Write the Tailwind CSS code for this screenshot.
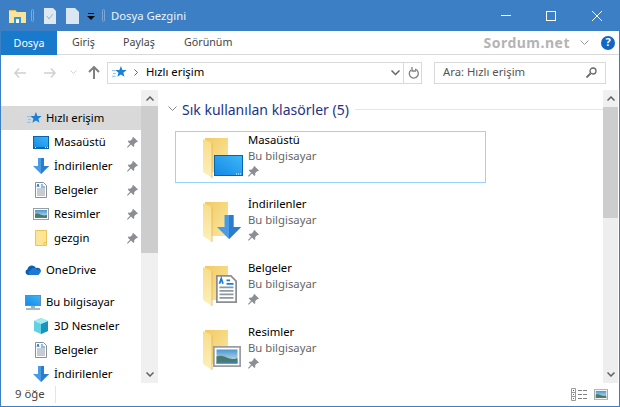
<!DOCTYPE html>
<html lang="tr">
<head>
  <meta charset="UTF-8" />
  <title>Dosya Gezgini</title>
  <script src="https://cdn.jsdelivr.net/npm/@tailwindcss/browser@4"></script>
</head>
<body class="bg-white">

<!-- icons -->
<svg class="fixed w-0 h-0" width="0" height="0">
  <defs>
    <linearGradient id="screen" x1="0" y1="1" x2="1" y2="0"><stop offset="0" stop-color="#1488e4"/><stop offset="1" stop-color="#3db8f8"/></linearGradient>
    <linearGradient id="sky" x1="0" y1="0" x2="0" y2="1"><stop offset="0" stop-color="#4a97cf"/><stop offset="1" stop-color="#d8eaf3"/></linearGradient>
    <linearGradient id="fold" x1="0" y1="0" x2="1" y2="1"><stop offset="0" stop-color="#f2c962"/><stop offset="1" stop-color="#fbe8a2"/></linearGradient>
    <linearGradient id="flap" x1="0" y1="0" x2="0" y2="1"><stop offset="0" stop-color="#f8dc88"/><stop offset="1" stop-color="#fdf0bc"/></linearGradient>
    <symbol id="pin" viewBox="0 0 12 12">
      <path d="M7 0l5 5-1 .8-.8-.3-2.400 2.400.2 1.900-1 1-2.600-2.600L.8 11.600 0 11l3.300-3.700L.8 4.800l1-1 1.900.2 2.400-2.400-.3-.8z" fill="#8b8f93"/>
    </symbol>
    <symbol id="star" viewBox="0 0 16 16">
      <path d="M9.500 1l1.600 4.200 4.500.2-3.500 2.800 1.200 4.400L9.500 10.100 5.700 12.600l1.200-4.400-3.400-2.800 4.400-.2z" fill="#1a7fd6"/>
      <path d="M0 6h4M1 9h3M0 12h4" stroke="#7cc0ef" stroke-width="1"/>
    </symbol>
    <symbol id="desk" viewBox="0 0 16 13">
      <rect x=".5" y=".5" width="15" height="12" fill="url(#screen)" stroke="#0a64ad"/>
      <path d="M1 11.500h14" stroke="#0a64ad"/><path d="M12 11.500h1M14 11.500h1M2 11.500h1" stroke="#ffffff"/>
    </symbol>
    <symbol id="down" viewBox="0 0 16 16">
      <path d="M5 0h6v8h5l-8 8-8-8h5z" fill="#4a9be6"/><path d="M8 0h3v8h5l-8 8z" fill="#2a7ccf"/>
    </symbol>
    <symbol id="doc" viewBox="0 0 12 16">
      <path d="M.5.500h8l3 3v12H.5z" fill="#fff" stroke="#8b8f93"/>
      <path d="M2 7h8M2 9h8M2 11h8M2 13h8" stroke="#8d98a2"/><path d="M2 5l1-3 1 3" fill="none" stroke="#1a7fd6"/><path d="M6 3h2M6 5h4" stroke="#1a7fd6"/>
    </symbol>
    <symbol id="pic" viewBox="0 0 16 12">
      <rect x=".5" y=".5" width="15" height="11" fill="#fff" stroke="#9a9ea2"/>
      <rect x="2" y="2" width="12" height="8" fill="url(#sky)"/>
      <path d="M2 6c3-1 4 0 7 1s4 0 5 0v3H2z" fill="#4a7a6a"/>
      <path d="M2 9h12v1H2z" fill="#3f7fb4"/>
    </symbol>
    <symbol id="plain" viewBox="0 0 12 16">
      <path d="M.5.500h11v15H.5z" fill="#fde595" stroke="#e8c45a"/><path d="M9 15.500v-3h2.500" fill="none" stroke="#e8c45a"/>
    </symbol>
    <symbol id="bigfolder" viewBox="0 0 26 40">
      <path d="M2 0h23v34H2z" fill="url(#fold)"/>
      <path d="M0 1l9 4v35l-9-6z" fill="url(#flap)"/>
      <path d="M9 5v35" stroke="#e2b54e" stroke-width=".8"/>
    </symbol>
  </defs>
</svg>

<div class="w-[620px] h-[407px] border border-t-0 border-[#3c7fc4] flex flex-col overflow-hidden text-[11.300px] text-black" style="font-family:'Noto Sans','Open Sans',sans-serif">

  <!-- title bar -->
  <div class="h-[31px] shrink-0 -mx-px bg-[#3c7fc4] flex items-center text-[#eef4fa]">
    <svg class="ml-[9px] w-[17px] h-[15px]" viewBox="0 0 17 15"><path d="M0 2h6l2 2h9v11H0z" fill="#fbe39a"/><path d="M0 2h6l1 1H0z" fill="#e9bd51"/><path d="M5 9h7v6H5z" fill="#2b9be0"/><path d="M7 11h3v4H7z" fill="#fff"/></svg>
    <div class="ml-[5px] w-[3px] h-[13px] border border-[#7ea8d6] rounded-sm"></div>
    <svg class="ml-[10px] w-[12px] h-[16px]" viewBox="0 0 12 16"><path d="M0 0h9l3 3v13H0z" fill="#dfe8f3"/><path d="M3 8l2 3 4-5" fill="none" stroke="#9fb2c6"/></svg>
    <svg class="ml-[10px] w-[13px] h-[16px]" viewBox="0 0 13 16"><path d="M0 0h9l4 4v12H0z" fill="#dbe6f4"/></svg>
    <svg class="ml-[8px] w-[8px] h-[8px] mt-[3px]" viewBox="0 0 8 8"><path d="M1 0h6v1H1zM0 3h8L4 7z" fill="#0a0a0a"/></svg>
    <div class="ml-[7px] w-[3px] h-[13px] border border-[#7ea8d6] rounded-sm"></div>
    <div class="ml-[6px] leading-none">Dosya Gezgini</div>
    <div class="ml-auto flex items-center">
      <div class="w-[10px] h-px bg-white"></div>
      <div class="ml-[35px] w-[10px] h-[10px] border border-white"></div>
      <svg class="ml-[36px] mr-[18px] w-[10px] h-[10px]" viewBox="0 0 10 10"><path d="M0 0l10 10M10 0L0 10" stroke="#fff" stroke-width="1"/></svg>
    </div>
  </div>

  <!-- ribbon tabs -->
  <div class="h-[24px] shrink-0 border-b border-[#d9d9d9] flex items-stretch text-[#444] text-[10.700px]">
    <div class="w-[56px] -mb-px bg-[#1979ca] text-white flex items-center justify-center">Dosya</div>
    <div class="ml-[15px] w-[21px] flex items-center">Giriş</div>
    <div class="ml-[30px] w-[31px] flex items-center">Paylaş</div>
    <div class="ml-[30px] flex items-center">Görünüm</div>
    <div class="ml-auto flex items-center font-bold text-[#b4b4b4] text-[14px] tracking-[.5px] pr-[7px]">Sordum.net</div>
    <svg class="ml-[3px] self-center w-[9px] h-[6px]" viewBox="0 0 9 6"><path d="M.5.500L4.500 4.500 8.500.500" fill="none" stroke="#9a9a9a"/></svg>
    <div class="ml-[12px] mr-[4px] self-center w-[14px] h-[14px] rounded-full bg-[#1068c4] text-white font-bold text-[11px] flex items-center justify-center">?</div>
  </div>

  <!-- address row -->
  <div class="h-[35px] shrink-0 flex items-center">
    <svg class="ml-[13px] w-[12px] h-[10px]" viewBox="0 0 12 10"><path d="M5 .5L1 5l4 4.500M1 5h11" fill="none" stroke="#d0d0d0" stroke-width="1.500"/></svg>
    <svg class="ml-[18px] w-[12px] h-[10px]" viewBox="0 0 12 10"><path d="M7 .5L11 5 7 9.500M11 5H0" fill="none" stroke="#d0d0d0" stroke-width="1.500"/></svg>
    <svg class="ml-[14px] w-[7px] h-[5px]" viewBox="0 0 7 5"><path d="M.5.500l3 3 3-3" fill="none" stroke="#d0d0d0"/></svg>
    <svg class="ml-[11px] w-[12px] h-[13px]" viewBox="0 0 12 13"><path d="M1 6l5-5 5 5M6 1v12" fill="none" stroke="#808080" stroke-width="2"/></svg>
    <div class="ml-[7px] w-[315px] h-[22px] border border-[#d9d9d9] flex items-center">
      <svg class="ml-[4px] w-[15px] h-[15px]"><use href="#star"/></svg>
      <svg class="ml-[7px] w-[4px] h-[7px]" viewBox="0 0 4 7"><path d="M.5.500l3 3-3 3" fill="none" stroke="#666"/></svg>
      <div class="ml-[8px]">Hızlı erişim</div>
      <svg class="ml-auto w-[9px] h-[6px]" viewBox="0 0 9 6"><path d="M.5.500l4 4 4-4" fill="none" stroke="#666" stroke-width="1.500"/></svg>
      <div class="ml-[3px] w-px h-full bg-[#d9d9d9]"></div>
      <svg class="ml-[4px] mr-[2px] w-[11px] h-[12px]" viewBox="0 0 11 12"><path d="M3 3a4.500 4.500 0 1 0 4-.8" fill="none" stroke="#808080" stroke-width="1.300"/><path d="M4 0v4h4" fill="none" stroke="#808080" stroke-width="1.300"/></svg>
    </div>
    <div class="ml-[12px] w-[172px] h-[22px] border border-[#d9d9d9] flex items-center text-[#555]">
      <div class="ml-[8px]">Ara: Hızlı erişim</div>
      <svg class="ml-auto mr-[8px] w-[11px] h-[11px]" viewBox="0 0 11 11"><circle cx="7" cy="4" r="3" fill="none" stroke="#666" stroke-width="1.300"/><path d="M4.500 6.500L.5 10.500" stroke="#666" stroke-width="1.800"/></svg>
    </div>
  </div>

  <!-- body -->
  <div class="flex-1 min-h-0 flex">

    <!-- nav pane -->
    <div class="w-[140px] shrink-0 pt-[16px] overflow-hidden">
      <div class="h-[24px] bg-[#d9d9d9] flex items-center pl-[26px]"><svg class="w-[15px] h-[15px]"><use href="#star"/></svg><span class="ml-[4px]">Hızlı erişim</span></div>
      <div class="h-[24px] flex items-center pl-[32px]"><svg class="w-[16px] h-[13px]"><use href="#desk"/></svg><span class="ml-[5px]">Masaüstü</span><svg class="ml-auto mr-[3px] w-[11px] h-[11px]"><use href="#pin"/></svg></div>
      <div class="h-[24px] flex items-center pl-[32px]"><svg class="w-[16px] h-[16px]"><use href="#down"/></svg><span class="ml-[5px]">İndirilenler</span><svg class="ml-auto mr-[3px] w-[11px] h-[11px]"><use href="#pin"/></svg></div>
      <div class="h-[24px] flex items-center pl-[34px]"><svg class="w-[12px] h-[16px]"><use href="#doc"/></svg><span class="ml-[7px]">Belgeler</span><svg class="ml-auto mr-[3px] w-[11px] h-[11px]"><use href="#pin"/></svg></div>
      <div class="h-[24px] flex items-center pl-[32px]"><svg class="w-[16px] h-[12px]"><use href="#pic"/></svg><span class="ml-[5px]">Resimler</span><svg class="ml-auto mr-[3px] w-[11px] h-[11px]"><use href="#pin"/></svg></div>
      <div class="h-[24px] flex items-center pl-[34px]"><svg class="w-[12px] h-[16px]"><use href="#plain"/></svg><span class="ml-[7px]">gezgin</span><svg class="ml-auto mr-[3px] w-[11px] h-[11px]"><use href="#pin"/></svg></div>

      <div class="mt-[8px] h-[24px] flex items-center pl-[24px]">
        <svg class="w-[16px] h-[10px]" viewBox="0 0 16 10"><path d="M3 10a3 3 0 0 1-.5-5.800A4.500 4.500 0 0 1 11 3a3.400 3.400 0 0 1 4.800 3.600L6 10z" fill="#0f5fb0"/><path d="M5 10a2.200 2.200 0 0 1 .5-4.300 3.500 3.500 0 0 1 6.500-1A2.800 2.800 0 0 1 15.800 7L13.500 10z" fill="#1f78d1"/></svg>
        <span class="ml-[5px]">OneDrive</span>
      </div>
      <div class="mt-[8px] h-[24px] flex items-center pl-[24px]">
        <svg class="w-[16px] h-[15px]" viewBox="0 0 16 15"><rect x=".5" y=".5" width="15" height="10" fill="url(#screen)" stroke="#5f8db8"/><path d="M6 11h4v2H6z" fill="#9fb3c4"/><path d="M1 14h14" stroke="#8aa0b4" stroke-width="1.500"/></svg>
        <span class="ml-[5px]">Bu bilgisayar</span>
      </div>
      <div class="h-[24px] flex items-center pl-[32px]">
        <svg class="w-[16px] h-[16px]" viewBox="0 0 16 16"><path d="M8 0l7 3v10l-7 3-7-3V3z" fill="#5fd2e4"/><path d="M8 6l7-3v10l-7 3z" fill="#1b93bc"/><path d="M8 0l7 3-7 3-7-3z" fill="#a7eaf2"/></svg>
        <span class="ml-[5px]">3D Nesneler</span>
      </div>
      <div class="h-[24px] flex items-center pl-[34px]"><svg class="w-[12px] h-[16px]"><use href="#doc"/></svg><span class="ml-[7px]">Belgeler</span></div>
      <div class="h-[24px] flex items-center pl-[32px]"><svg class="w-[16px] h-[16px]"><use href="#down"/></svg><span class="ml-[5px]">İndirilenler</span></div>
    </div>

    <!-- nav scrollbar -->
    <div class="w-[17px] shrink-0 bg-[#f0f0f0] flex flex-col">
      <div class="h-[16px] flex items-center justify-center"><svg class="w-[8px] h-[5px]" viewBox="0 0 8 5"><path d="M.5 4.500L4 1l3.500 3.500" fill="none" stroke="#606060" stroke-width="1.500"/></svg></div>
      <div class="h-[147px] bg-[#cdcdcd]"></div>
      <div class="flex-1"></div>
      <div class="h-[18px] flex items-center justify-center"><svg class="w-[8px] h-[5px]" viewBox="0 0 8 5"><path d="M.5.500L4 4l3.500-3.500" fill="none" stroke="#606060" stroke-width="1.500"/></svg></div>
    </div>

    <!-- main pane -->
    <div class="flex-1 min-w-0 pl-[9px] pt-[9px]">
      <div class="h-[20px] flex items-center">
        <svg class="ml-[1px] w-[9px] h-[6px]" viewBox="0 0 9 6"><path d="M.5.500l4 4 4-4" fill="none" stroke="#8a8a8a"/></svg>
        <span class="ml-[5px] text-[14px] text-[#1e3287]">Sık kullanılan klasörler (5)</span>
        <div class="ml-[6px] flex-1 h-px bg-[#e5e5e5]"></div>
      </div>
      <div class="mt-[12px] ml-[8px] flex flex-col">

        <div class="w-[311px] h-[52px] border border-[#99d1ff] flex">
          <svg class="ml-[27px] mt-[6px] w-[42px] h-[42px]" viewBox="0 0 42 42"><use href="#bigfolder" width="26" height="40"/><rect x="11.500" y="17.500" width="28" height="20" fill="url(#screen)" stroke="#0a64ad"/><path d="M33 36h6" stroke="#fff" stroke-dasharray="1 1"/></svg>
          <div class="ml-[3px] leading-[16px]"><div>Masaüstü</div><div class="text-[#666]">Bu bilgisayar</div><svg class="w-[11px] h-[11px] mt-[2px]"><use href="#pin"/></svg></div>
        </div>
        <div class="mt-[12px] w-[311px] h-[52px] border border-transparent flex">
          <svg class="ml-[27px] mt-[6px] w-[42px] h-[42px]" viewBox="0 0 42 42"><use href="#bigfolder" width="26" height="40"/><use href="#down" x="14" y="13" width="24" height="24"/></svg>
          <div class="ml-[3px] leading-[16px]"><div>İndirilenler</div><div class="text-[#666]">Bu bilgisayar</div><svg class="w-[11px] h-[11px] mt-[2px]"><use href="#pin"/></svg></div>
        </div>
        <div class="mt-[12px] w-[311px] h-[52px] border border-transparent flex">
          <svg class="ml-[27px] mt-[6px] w-[42px] h-[42px]" viewBox="0 0 42 42"><use href="#bigfolder" width="26" height="40"/><use href="#doc" x="13" y="9" width="21" height="28"/></svg>
          <div class="ml-[3px] leading-[16px]"><div>Belgeler</div><div class="text-[#666]">Bu bilgisayar</div><svg class="w-[11px] h-[11px] mt-[2px]"><use href="#pin"/></svg></div>
        </div>
        <div class="mt-[12px] w-[311px] h-[52px] border border-transparent flex">
          <svg class="ml-[27px] mt-[6px] w-[42px] h-[42px]" viewBox="0 0 42 42"><use href="#bigfolder" width="26" height="40"/><use href="#pic" x="10" y="16" width="28" height="21"/></svg>
          <div class="ml-[3px] leading-[16px]"><div>Resimler</div><div class="text-[#666]">Bu bilgisayar</div><svg class="w-[11px] h-[11px] mt-[2px]"><use href="#pin"/></svg></div>
        </div>
      </div>
    </div>

    <!-- main scrollbar -->
    <div class="w-[15px] shrink-0 mr-px bg-[#eeeeee] flex flex-col">
      <div class="h-[17px] bg-[#f0f0f0] flex items-center justify-center"><svg class="w-[8px] h-[5px]" viewBox="0 0 8 5"><path d="M.5 4.500L4 1l3.500 3.500" fill="none" stroke="#606060" stroke-width="1.500"/></svg></div>
      <div class="h-[111px] bg-[#cdcdcd]"></div>
      <div class="flex-1"></div>
      <div class="h-[18px] flex items-center justify-center"><svg class="w-[8px] h-[5px]" viewBox="0 0 8 5"><path d="M.5.500L4 4l3.500-3.500" fill="none" stroke="#606060" stroke-width="1.500"/></svg></div>
    </div>
  </div>

  <!-- status bar -->
  <div class="h-[23px] shrink-0 flex items-center text-[#444]">
    <div class="ml-[14px] pr-[10px] border-r border-[#e5e5e5]">9 öğe</div>
    <div class="ml-auto mr-[11px] flex items-center">
      <svg class="w-[17px] h-[13px]" viewBox="0 0 17 13"><path d="M.5.500h4v12h-4zM.5 4.500h4M.5 8.500h4" fill="none" stroke="#9a9a9a"/><path d="M7 2.500h4M12 2.500h4M7 6.500h4M12 6.500h4M7 10.500h4M12 10.500h4" stroke="#808080"/><path d="M2 2h1v1H2z" fill="#555"/><path d="M2 6h1v1H2z" fill="#1a7fd6"/><path d="M2 10h1v1H2z" fill="#c0601a"/></svg>
      <svg class="ml-[6px] w-[14px] h-[11px]"><use href="#pic"/></svg>
    </div>
  </div>
</div>

</body>
</html>
